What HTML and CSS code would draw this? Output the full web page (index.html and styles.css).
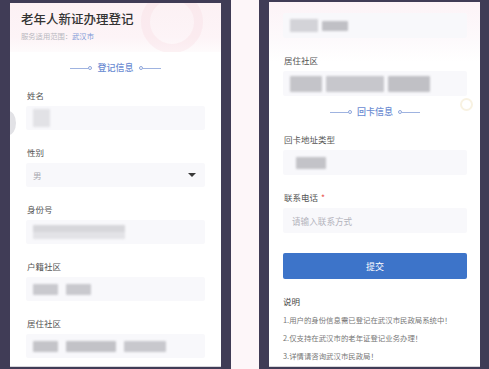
FILE: index.html
```html
<!DOCTYPE html>
<html lang="zh">
<head>
<meta charset="utf-8">
<link rel="stylesheet" href="styles.css">
</head>
<body>
<div class="phone phone-left">
  <div class="screen">
    <div class="header">
      <div class="deco"></div>
      <h1 class="title">老年人新证办理登记</h1>
      <div class="subtitle">服务适用范围：<span class="city">武汉市</span></div>
    </div>
    <div class="form">
      <div class="divider"><span class="line"></span><span class="dot"></span><span class="divider-text">登记信息</span><span class="dot"></span><span class="line"></span></div>
      <div class="field">
        <div class="label">姓名</div>
        <div class="input"><span class="blur b-name"></span></div>
      </div>
      <div class="field">
        <div class="label">性别</div>
        <div class="input select"><span class="value">男</span><span class="caret"></span></div>
      </div>
      <div class="field">
        <div class="label">身份号</div>
        <div class="input"><span class="blur b-id"></span></div>
      </div>
      <div class="field">
        <div class="label">户籍社区</div>
        <div class="input"><span class="blur b-s1"></span><span class="blur b-s2"></span></div>
      </div>
      <div class="field">
        <div class="label">居住社区</div>
        <div class="input"><span class="blur b-l1"></span><span class="blur b-l2"></span><span class="blur b-l3"></span></div>
      </div>
    </div>
    <div class="side-handle"></div>
  </div>
</div>
<div class="phone phone-right">
  <div class="screen">
    <div class="form form-right">
      <div class="field field-cut">
        <div class="label label-cut"></div>
        <div class="input"><span class="blur b-r1"></span><span class="blur b-r1b"></span></div>
      </div>
      <div class="field">
        <div class="label">居住社区</div>
        <div class="input"><span class="blur b-r2"></span><span class="blur b-r2b"></span><span class="blur b-r2c"></span></div>
      </div>
      <div class="divider divider-right"><span class="line"></span><span class="dot"></span><span class="divider-text">回卡信息</span><span class="dot"></span><span class="line"></span></div>
      <div class="field">
        <div class="label">回卡地址类型</div>
        <div class="input"><span class="blur b-r3"></span></div>
      </div>
      <div class="field">
        <div class="label">联系电话 <span class="req">*</span></div>
        <div class="input"><span class="placeholder">请输入联系方式</span></div>
      </div>
      <button class="submit">提交</button>
      <div class="notes">
        <div class="notes-title">说明</div>
        <p class="note">1.用户的身份信息需已登记在武汉市民政局系统中！</p>
        <p class="note">2.仅支持在武汉市的老年证登记业务办理！</p>
        <p class="note">3.详情请咨询武汉市民政局！</p>
      </div>
    </div>
    <div class="float-ring"></div>
  </div>
</div>
</body>
</html>
```
FILE: styles.css
```css
* { box-sizing: border-box; }
html, body { margin: 0; padding: 0; }
body {
  width: 489px;
  height: 369px;
  overflow: hidden;
  background: #fdf6f9;
  display: flex;
  gap: 28px;
  font-family: "Noto Sans CJK SC", "Noto Sans", sans-serif;
}
.phone {
  height: 369px;
  background: #403c56;
  border-top: 3px solid #403c56;
  border-left: 10px solid #403c56;
  border-right: 10px solid #403c56;
}
.phone-left { width: 231px; }
.phone-right { width: 230px; border-right-width: 9px; border-top-width: 2px; }
.screen {
  position: relative;
  height: 364px;
  background: #fff;
  border-bottom: 1px solid #d6d6db;
  overflow: hidden;
}
.phone-right .screen { height: 365px; background: linear-gradient(180deg, #fcf3f7 0px, #fdfafc 40px, #fff 60px); }
.header {
  position: relative;
  height: 49px;
  padding: 7px 11px 0;
  background: linear-gradient(180deg, #fcf1f4 0%, #fdf4f7 70%, #fefbfc 100%);
  overflow: hidden;
}
.deco {
  position: absolute;
  right: 18px;
  top: -12px;
  width: 62px;
  height: 62px;
  border-radius: 50%;
  border: 9px solid rgba(245, 205, 216, 0.22);
}
.title {
  position: relative;
  margin: 0;
  font-size: 12.5px;
  line-height: 18px;
  font-weight: 500;
  color: #333;
}
.subtitle {
  position: relative;
  margin-top: 3px;
  font-size: 7.3px;
  line-height: 10px;
  color: #b8b8c0;
}
.city { color: #7b98d6; }
.form { padding: 0 16px; }
.divider {
  height: 32px;
  display: flex;
  align-items: center;
  justify-content: center;
  color: #6b8cd2;
}
.divider .line { width: 18px; height: 1px; background: #9fb3e0; }
.divider .dot {
  width: 4px; height: 4px; border-radius: 50%;
  border: 1px solid #8ea6dc;
  background: #fff;
}
.divider-text {
  font-size: 9px;
  line-height: 12px;
  margin: 0 5px;
  font-weight: 500;
}
.field { margin-bottom: 11px; }
.label {
  height: 22px;
  display: flex;
  align-items: center;
  padding-left: 1px;
  font-size: 8.5px;
  color: #555;
}
.req { color: #e8574f; margin-left: 3px; }
.input {
  position: relative;
  height: 24px;
  background: #f8f8fb;
  border-radius: 2px;
  display: flex;
  align-items: center;
  padding-left: 7px;
}
.select { justify-content: space-between; padding-right: 9px; }
.value { font-size: 8.5px; color: #a8a8b0; }
.caret {
  width: 0; height: 0;
  border-left: 4px solid transparent;
  border-right: 4px solid transparent;
  border-top: 4px solid #3a3a3a;
}
.placeholder { font-size: 8.6px; color: #b3b3bb; padding-left: 2px; }
.blur {
  display: block;
  height: 11px;
  background: #c9c9ce;
  filter: blur(1.2px);
  border-radius: 1px;
}
.b-name { width: 17px; height: 18px; background: #e2e2e6; }
.b-id { width: 92px; height: 14px; background: linear-gradient(180deg, #d7d7db 0 50%, #e3e3e7 50% 100%); }
.b-s1 { width: 25px; }
.b-s2 { width: 25px; margin-left: 8px; }
.b-l1 { width: 25px; background: #c4c4c9; }
.b-l2 { width: 50px; margin-left: 8px; background: #c2c2c7; }
.b-l3 { width: 42px; margin-left: 8px; background: #c8c8cd; }
.side-handle {
  position: absolute;
  left: -9px;
  top: 108px;
  width: 15px;
  height: 24px;
  border-radius: 50%;
  background: #e2e2e6;
  filter: blur(0.6px);
}
.form-right { padding: 0 13px 0 14px; }
.phone-right .input { height: 25px; padding-left: 7px; }
.phone-right .field-cut .label { height: 11px; }
.b-r1 { width: 28px; height: 13px; background: #d3d3d8; }
.b-r1b { width: 26px; height: 10px; margin-left: 4px; background: #c0c0c5; }
.b-r2 { width: 32px; height: 16px; background: #c4c4c9; }
.b-r2b { width: 58px; height: 16px; margin-left: 4px; background: #c7c7cc; }
.b-r2c { width: 42px; height: 16px; margin-left: 4px; background: #c0c0c5; }
.b-r3 { width: 30px; height: 12px; margin-left: 6px; background: #c3c3c8; }
.divider-right { height: 32px; margin-top: -11px; }
.submit {
  display: block;
  width: 100%;
  height: 26px;
  margin-top: 20px;
  border: 0;
  border-radius: 2px;
  background: #3d74c9;
  color: #fff;
  font-family: inherit;
  font-size: 9px;
}
.notes { margin-top: 13px; }
.notes-title { font-size: 8.5px; line-height: 18px; color: #444; }
.note {
  margin: 1px 0 0;
  font-size: 7.4px;
  line-height: 17px;
  color: #777;
}
.float-ring {
  position: absolute;
  left: 191px;
  top: 96px;
  width: 13px;
  height: 13px;
  border-radius: 50%;
  border: 2px solid #f8f2e2;
}
```
